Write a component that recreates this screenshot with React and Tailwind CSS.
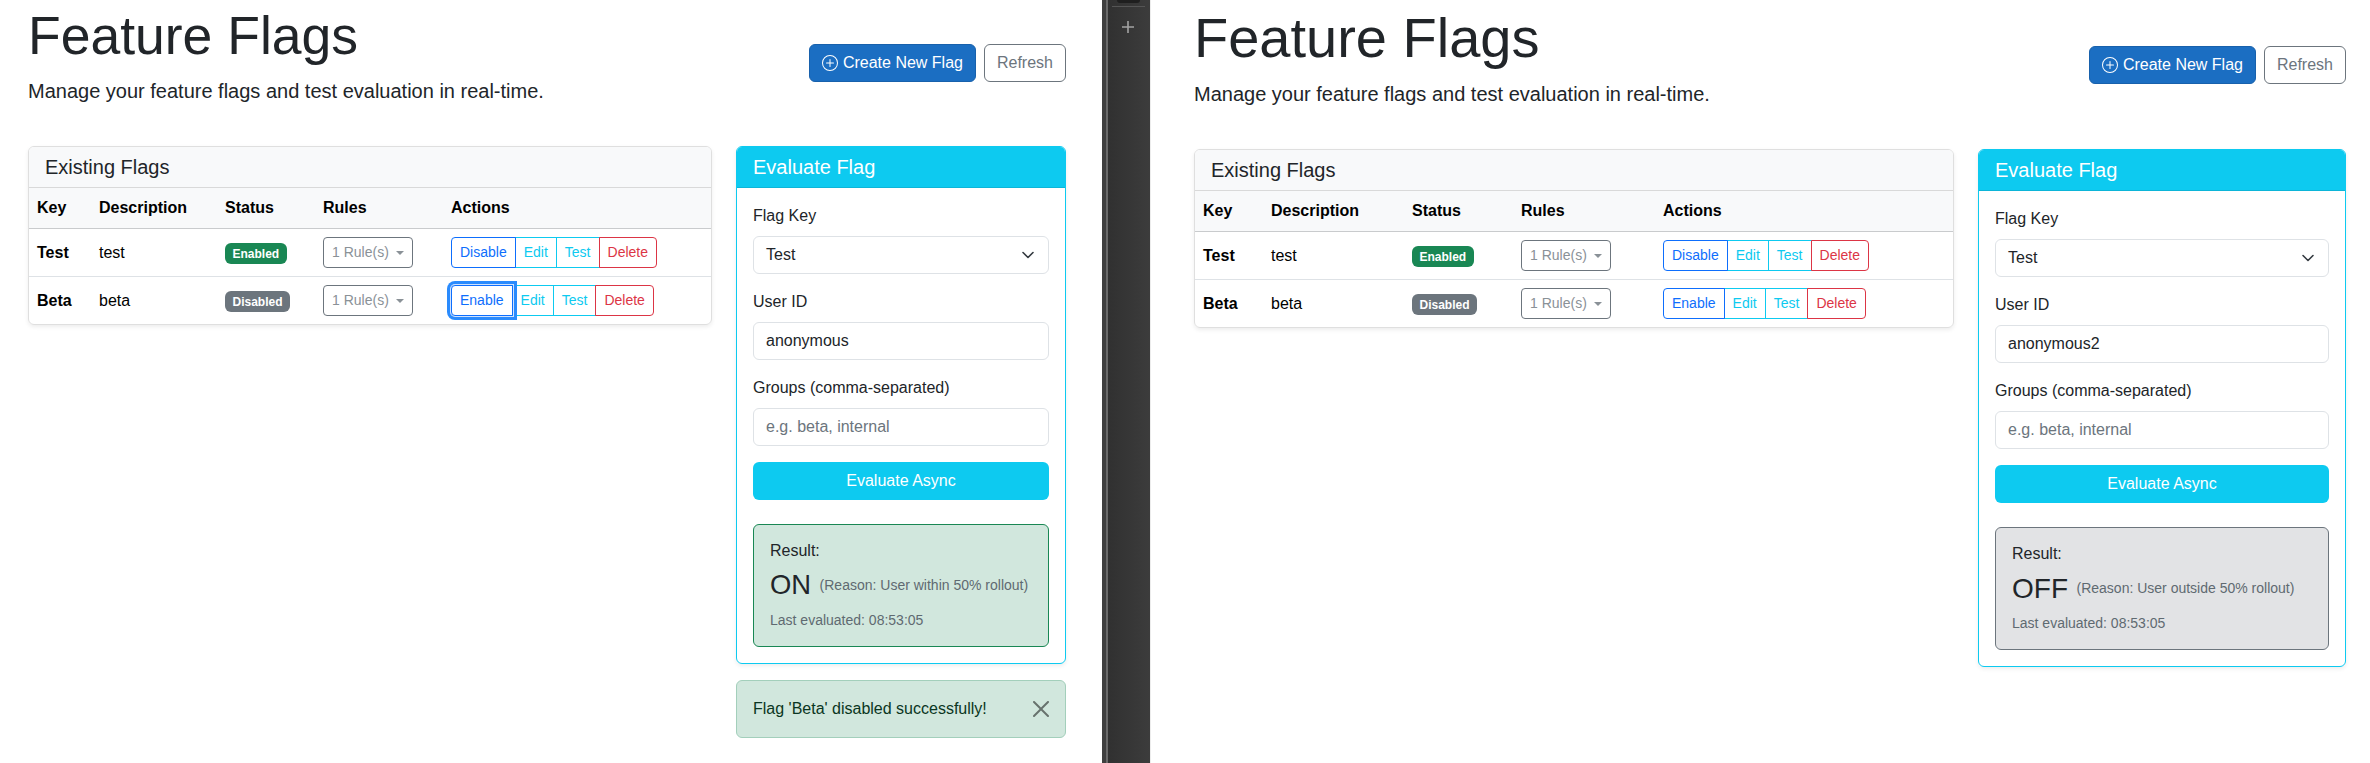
import React from "react";

function Caret() {
  return <span className="inline-block ml-[7.5px] border-t-[4.2px] border-x-[4.2px] border-b-0 border-x-transparent border-t-current" />;
}

function PlusCircle() {
  return (
    <svg width="16" height="16" viewBox="0 0 16 16" fill="currentColor" className="shrink-0">
      <path d="M8 15A7 7 0 1 1 8 1a7 7 0 0 1 0 14zm0 1A8 8 0 1 0 8 0a8 8 0 0 0 0 16z" />
      <path d="M8 4a.5.5 0 0 1 .5.5v3h3a.5.5 0 0 1 0 1h-3v3a.5.5 0 0 1-1 0v-3h-3a.5.5 0 0 1 0-1h3v-3A.5.5 0 0 1 8 4z" />
    </svg>
  );
}

function Row({ flagKey, desc, status, toggle, focused, last }) {
  const cell = "px-2 py-2 align-middle" + (last ? "" : " border-b border-[#dee2e6]");
  return (
    <tr>
      <td className={cell + " font-bold text-black"}>{flagKey}</td>
      <td className={cell + " text-black"}>{desc}</td>
      <td className={cell}>
        <span className={"inline-flex h-[21px] items-center rounded-[6px] px-[7.5px] text-[12px] font-bold text-white mt-[2px] " + (status === "Enabled" ? "bg-[#198754]" : "bg-[#6c757d]")}>
          {status}
        </span>
      </td>
      <td className={cell}>
        <span className="inline-flex h-[31px] items-center rounded-[4px] border border-[#6c757d] px-2 text-[14px] text-[#8a9197]">
          1 Rule(s)
          <Caret />
        </span>
      </td>
      <td className={cell}>
        <div className="inline-flex h-[31px] text-[14px]">
          <button className={"relative rounded-l-[4px] border border-[#0d6efd] px-2 text-[#0d6efd] " + (focused ? "z-10 rounded-r-none shadow-[0_0_0_1px_#cfe2ff,0_0_0_4px_#2a8bfd]" : "")}>{toggle}</button>
          <button className="-ml-px border border-[#0dcaf0] px-2 text-[#0dcaf0]">Edit</button>
          <button className="-ml-px border border-[#0dcaf0] px-2 text-[#0dcaf0]">Test</button>
          <button className="-ml-px rounded-r-[4px] border border-[#dc3545] px-2 text-[#dc3545]">Delete</button>
        </div>
      </td>
    </tr>
  );
}

function Field({ label, children }) {
  return (
    <div className="mb-4">
      <div className="mb-2 h-6 text-[16px] leading-6 text-[#212529]">{label}</div>
      {children}
    </div>
  );
}

function Pane({ paneClass, titleClass, gridClass, colClasses, onClass, user, result, focused, alert }) {
  return (
    <div className={"min-w-0 pt-1 " + paneClass}>
      <div className="mb-6 flex items-center justify-between">
        <div>
          <h1 className={"mb-2 leading-[1.2] font-normal text-[#212529] " + titleClass}>Feature Flags</h1>
          <p className="mb-4 text-[20px] leading-[30px] text-[#212529]">Manage your feature flags and test evaluation in real-time.</p>
        </div>
        <div className="flex gap-2 text-[16px]">
          <button className="flex h-[38px] items-center gap-[5px] rounded-[6px] border border-[#1861ac] bg-[#1b6ec2] px-3 text-white">
            <PlusCircle />
            Create New Flag
          </button>
          <button className="h-[38px] rounded-[6px] border border-[#6c757d] px-3 text-[#6c757d]">Refresh</button>
        </div>
      </div>
      <div className={"grid items-start gap-6 " + gridClass}>
        <div className="overflow-hidden rounded-[6px] border border-[#dfdfdf] shadow-[0_2px_4px_rgba(0,0,0,0.075)]">
          <div className="border-b border-[#d9d9d9] bg-[#f8f9fa] px-4 py-2 text-[20px] leading-6 text-[#212529]">Existing Flags</div>
          <table className="w-full table-fixed border-collapse text-[16px]">
            <colgroup>
              {colClasses.map((c, i) => (
                <col key={i} className={c} />
              ))}
            </colgroup>
            <thead>
              <tr className="bg-[#f8f9fa] text-left font-bold text-black">
                {["Key", "Description", "Status", "Rules", "Actions"].map((h) => (
                  <th key={h} className="border-b border-[#c9cbcd] p-2 leading-6">{h}</th>
                ))}
              </tr>
            </thead>
            <tbody>
              <Row flagKey="Test" desc="test" status="Enabled" toggle="Disable" />
              <Row flagKey="Beta" desc="beta" status="Disabled" toggle="Enable" focused={focused} last />
            </tbody>
          </table>
        </div>
        <div>
          <div className="overflow-hidden rounded-[6px] border border-[#0dcaf0] shadow-[0_2px_4px_rgba(0,0,0,0.075)]">
            <div className="border-b border-[#0cb5d8] bg-[#0dcaf0] px-4 py-2 text-[20px] leading-6 text-white">Evaluate Flag</div>
            <div className="p-4">
              <Field label="Flag Key">
                <div className="flex h-[38px] items-center justify-between rounded-[6px] border border-[#dee2e6] pr-3 pl-3 text-[16px] text-[#212529]">
                  Test
                  <svg width="16" height="16" viewBox="0 0 16 16" fill="none" stroke="#343a40" strokeWidth="1.6" strokeLinecap="round" strokeLinejoin="round">
                    <path d="m3 5.5 5 5 5-5" />
                  </svg>
                </div>
              </Field>
              <Field label="User ID">
                <input readOnly value={user} className="block h-[38px] w-full rounded-[6px] border border-[#dee2e6] px-3 text-[16px] text-[#212529] outline-none" />
              </Field>
              <Field label="Groups (comma-separated)">
                <input readOnly placeholder="e.g. beta, internal" className="block h-[38px] w-full rounded-[6px] border border-[#dee2e6] px-3 text-[16px] text-[#212529] outline-none placeholder:text-[#6c757d]" />
              </Field>
              <button className="mb-6 block h-[38px] w-full rounded-[6px] bg-[#0dcaf0] text-[16px] text-white">Evaluate Async</button>
              <div className={"rounded-[6px] border p-4 text-[#212529] " + (result.on ? "border-[#198754] bg-[#d1e7dd]" : "border-[#6c757d] bg-[#e2e3e5]")}>
                <div className="-mt-[2px] mb-[6px] text-[16px] leading-6">Result:</div>
                <div className="mb-[8px] flex h-[33px] items-center gap-[8.5px]">
                  <span className={"leading-[1.2] " + onClass}>{result.on ? "ON" : "OFF"}</span>
                  <span className="text-[14px] text-[#5f6a71]">{result.reason}</span>
                </div>
                <div className="-mb-px text-[14px] leading-[21px] text-[#5f6a71]">Last evaluated: 08:53:05</div>
              </div>
            </div>
          </div>
          {alert && (
            <div className="mt-4 flex h-[58px] items-center justify-between rounded-[6px] border border-[#a3cfbb] bg-[#d1e7dd] pr-4 pl-4 text-[16px] text-[#0a3622]">
              {alert}
              <svg width="16" height="16" viewBox="0 0 16 16" fill="#000" opacity="0.5">
                <path d="M.293.293a1 1 0 0 1 1.414 0L8 6.586 14.293.293a1 1 0 1 1 1.414 1.414L9.414 8l6.293 6.293a1 1 0 0 1-1.414 1.414L8 9.414l-6.293 6.293a1 1 0 0 1-1.414-1.414L6.586 8 .293 1.707a1 1 0 0 1 0-1.414z" />
              </svg>
            </div>
          )}
        </div>
      </div>
    </div>
  );
}

export default function App() {
  return (
    <div className="flex h-[763px] w-[2370px] overflow-hidden bg-white font-['Liberation_Sans',Arial,sans-serif]">
      <div className="w-[1102px] shrink-0">
        <Pane
          paneClass="pr-[36px] pl-[28px]"
          titleClass="text-[53.5px]"
          gridClass="grid-cols-[684px_330px]"
          colClasses={["w-[62px]", "w-[126px]", "w-[98px]", "w-[128px]", "w-auto"]}
          onClass="text-[27.4px]"
          user="anonymous"
          focused
          result={{ on: true, reason: "(Reason: User within 50% rollout)" }}
          alert="Flag 'Beta' disabled successfully!"
        />
      </div>
      <div className="relative w-[49px] shrink-0 border-r border-[#ececec] bg-[linear-gradient(90deg,#2f2f2f,#3c3c3c)]">
        <div className="absolute inset-y-0 left-0 w-[4px] bg-[#3f3f3f]" />
        <div className="absolute inset-y-0 left-[4px] w-[2px] bg-[#6a6a6a]" />
        <div className="absolute top-0 left-[15px] h-[3px] w-[23px] rounded-b-[3px] bg-[#1f1f1f]" />
        <div className="absolute top-[6px] left-[10px] h-px w-[33px] bg-[#555555]" />
        <div className="absolute top-[21px] left-[20px] h-[12px] w-[12px] text-[#a3a3a3]">
          <svg width="12" height="12" viewBox="0 0 12 12" fill="currentColor">
            <path d="M5.2 0h1.6v5.2H12v1.6H6.8V12H5.2V6.8H0V5.2h5.2z" />
          </svg>
        </div>
      </div>
      <div className="min-w-0 flex-1">
        <Pane
          paneClass="pr-[24px] pl-[43px]"
          titleClass="text-[56px]"
          gridClass="grid-cols-[760px_368px]"
          colClasses={["w-[68px]", "w-[141px]", "w-[109px]", "w-[142px]", "w-auto"]}
          onClass="text-[28px]"
          user="anonymous2"
          result={{ on: false, reason: "(Reason: User outside 50% rollout)" }}
        />
      </div>
    </div>
  );
}
